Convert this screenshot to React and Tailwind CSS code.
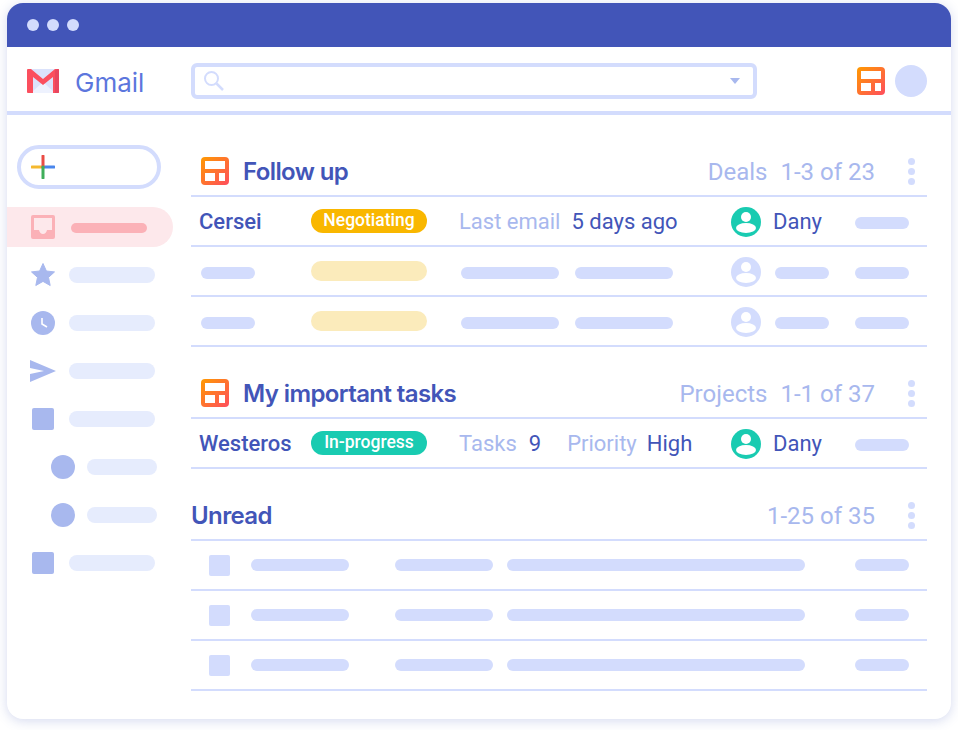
const pillColors = "bg-[#d3dcfd]";

function Pill({ className }) {
  return <div className={"rounded-full " + className}></div>;
}

function TileIcon({ className }) {
  return (
    <svg className={className} width="28" height="28" viewBox="0 0 28 28" xmlns="http://www.w3.org/2000/svg">
      <defs>
        <linearGradient id="tile" x1="0" y1="0" x2="1" y2="1">
          <stop offset="0" stopColor="#ff9a00" />
          <stop offset="1" stopColor="#ff4d5e" />
        </linearGradient>
      </defs>
      <rect width="28" height="28" rx="4" fill="url(#tile)" />
      <rect x="4" y="4" width="20" height="8" fill="#fff" />
      <rect x="4" y="16" width="10" height="8" fill="#fff" />
      <rect x="18" y="16" width="6" height="8" fill="#fff" />
    </svg>
  );
}

function GmailLogo() {
  return (
    <svg width="32" height="24" viewBox="0 0 32 24" xmlns="http://www.w3.org/2000/svg">
      <rect x="4" y="0" width="24" height="24" fill="#dbe2fb" />
      <path d="M4 24 L16 13 L28 24 Z" fill="#eef2fe" />
      <path d="M0 1 Q0 0 1 0 H4 L16 10 L28 0 H31 Q32 0 32 1 V23 Q32 24 31 24 H26 V8 L16 16 L6 8 V24 H1 Q0 24 0 23 Z" fill="#fb4f5e" />
      <path d="M30 0 H31 Q32 0 32 1 V23 Q32 24 31 24 H28 V2 Z" fill="#e8465f" />
    </svg>
  );
}

function Avatar({ color }) {
  return (
    <svg className="mt-[2px] shrink-0" width="30" height="30" viewBox="0 0 30 30" xmlns="http://www.w3.org/2000/svg">
      <circle cx="15" cy="15" r="15" fill={color} />
      <circle cx="15" cy="10" r="5" fill="#fff" />
      <ellipse cx="15" cy="21" rx="10" ry="5" fill="#fff" />
    </svg>
  );
}

function SidebarIcon({ kind }) {
  if (kind === "inbox") {
    return (
      <svg width="24" height="24" viewBox="0 0 24 24" xmlns="http://www.w3.org/2000/svg">
        <path fillRule="evenodd" d="M2 0 H22 Q24 0 24 2 V22 Q24 24 22 24 H2 Q0 24 0 22 V2 Q0 0 2 0 Z M3 3 V15 H8 Q9 19 12 19 Q15 19 16 15 H21 V3 Z" fill="#fbb1b7" />
      </svg>
    );
  }
  if (kind === "star") {
    return (
      <svg width="24" height="24" viewBox="0 0 24 24" xmlns="http://www.w3.org/2000/svg">
        <path d="M12 0.5 L15.4 8 L23.5 8.9 L17.5 14.4 L19.2 22.5 L12 18.4 L4.8 22.5 L6.5 14.4 L0.5 8.9 L8.6 8 Z" fill="#a8b8ee" stroke="#a8b8ee" strokeWidth="1" strokeLinejoin="round" />
      </svg>
    );
  }
  if (kind === "clock") {
    return (
      <svg width="24" height="24" viewBox="0 0 24 24" xmlns="http://www.w3.org/2000/svg">
        <circle cx="12" cy="12" r="12" fill="#a8b8ee" />
        <path d="M11 7 V13 L16 16" fill="none" stroke="#fff" strokeWidth="1.6" />
      </svg>
    );
  }
  if (kind === "send") {
    return (
      <svg className="-ml-[1px] shrink-0" width="26" height="24" viewBox="0 0 26 24" xmlns="http://www.w3.org/2000/svg">
        <path d="M0 1 L26 12 L0 23 V15 L14 12 L0 9 Z" fill="#a8b8ee" />
      </svg>
    );
  }
  if (kind === "circle") {
    return <div className="w-6 h-6 rounded-full bg-[#a8b8ee]"></div>;
  }
  return <div className="w-[22px] h-[22px] rounded-[2px] bg-[#a8b8ee]"></div>;
}

const sidebarRows = [
  { kind: "star" },
  { kind: "clock" },
  { kind: "send" },
  { kind: "square" },
  { kind: "circle", sub: true },
  { kind: "circle", sub: true },
  { kind: "square" },
];

function Sidebar() {
  return (
    <aside className="w-[166px] shrink-0 pt-[30px]">
      <div className="ml-[10px] w-[144px] h-[44px] rounded-full border-4 border-[#d3dcfd] flex items-center pl-[10px]">
        <svg width="24" height="24" viewBox="0 0 24 24" xmlns="http://www.w3.org/2000/svg">
          <path d="M1 12 H12" stroke="#f5b92f" strokeWidth="3" strokeLinecap="round" />
          <path d="M12 12 H23" stroke="#4a86ec" strokeWidth="3" strokeLinecap="round" />
          <path d="M12 1 V12" stroke="#ea4c45" strokeWidth="3" strokeLinecap="round" />
          <path d="M12 12 V23" stroke="#3fae5a" strokeWidth="3" strokeLinecap="round" />
        </svg>
      </div>
      <div className="mt-[18px] h-[40px] rounded-r-full bg-[#fde8eb] flex items-center pl-[24px]">
        <SidebarIcon kind="inbox" />
        <Pill className="ml-[16px] mt-[2px] w-[76px] h-[10px] bg-[#fbb1b7]" />
      </div>
      <div className="mt-1">
        {sidebarRows.map((row, i) => (
          <div key={i} className={"h-[48px] flex items-center " + (row.sub ? "pl-[44px]" : "pl-[24px]")}>
            <div className="w-6 h-6 flex items-center justify-center">
              <SidebarIcon kind={row.kind} />
            </div>
            <Pill className={row.sub ? "ml-[12px] w-[70px] h-4 bg-[#e6ecfd]" : "ml-[14px] w-[86px] h-4 bg-[#e6ecfd]"} />
          </div>
        ))}
      </div>
    </aside>
  );
}

function SectionHeader({ title, icon, label, range, className }) {
  return (
    <div className={"flex items-center justify-between border-b-2 border-[#d3dcfd] h-[52px] pt-[3px] " + className}>
      <div className="flex items-center">
        {icon && <TileIcon className="ml-[10px] mr-[14px] -mt-[1px]" />}
        <span className="font-['Inter',sans-serif] text-[24px] font-semibold tracking-[-0.6px] text-[#4255b8]">{title}</span>
      </div>
      <div className="flex items-center">
        <span className="text-[24px] text-[#a8b8ee]">{label && <span className="mr-[13px]">{label}</span>}{range}</span>
        <div className="ml-[33px] mr-[12px] -mt-[1px] flex flex-col gap-[3px]">
          <div className="w-[7px] h-[7px] rounded-full bg-[#d3dcfd]"></div>
          <div className="w-[7px] h-[7px] rounded-full bg-[#d3dcfd]"></div>
          <div className="w-[7px] h-[7px] rounded-full bg-[#d3dcfd]"></div>
        </div>
      </div>
    </div>
  );
}

function Row({ children }) {
  return (
    <div className="grid grid-cols-[120px_148px_272px_124px_1fr] items-center h-[50px] border-b-2 border-[#d3dcfd]">
      {children}
    </div>
  );
}

function Person() {
  return (
    <div className="flex items-center">
      <Avatar color="#19cbb1" />
      <span className="ml-3 text-[22px] text-[#4255b8]">Dany</span>
    </div>
  );
}

function Badge({ color, text }) {
  return (
    <div className={"w-[116px] h-6 pb-[2px] rounded-full text-white text-[17.5px] font-medium flex items-center justify-center " + color}>{text}</div>
  );
}

function EmptyRow() {
  return (
    <Row>
      <Pill className={"ml-[10px] mt-1 w-[54px] h-3 " + pillColors} />
      <Pill className="w-[116px] h-5 bg-[#fbebbb]" />
      <div className="flex pl-[2px] mt-1 gap-4">
        <Pill className={"w-[98px] h-3 " + pillColors} />
        <Pill className={"w-[98px] h-3 " + pillColors} />
      </div>
      <div className="flex items-center">
        <Avatar color="#d3dcfd" />
        <Pill className={"ml-[14px] mt-1 w-[54px] h-3 " + pillColors} />
      </div>
      <Pill className={"mt-1 w-[54px] h-3 " + pillColors} />
    </Row>
  );
}

function MailRow() {
  return (
    <div className="flex items-center h-[50px] border-b-2 border-[#d3dcfd]">
      <div className="ml-[18px] mt-[1px] w-[21px] h-[21px] rounded-[2px] bg-[#d3dcfd]"></div>
      <Pill className={"ml-[21px] w-[98px] h-3 " + pillColors} />
      <Pill className={"ml-[46px] w-[98px] h-3 " + pillColors} />
      <Pill className={"ml-[14px] w-[298px] h-3 " + pillColors} />
      <Pill className={"ml-[50px] w-[54px] h-3 " + pillColors} />
    </div>
  );
}

export default function App() {
  return (
    <div className="w-[958px] h-[730px] bg-white pt-[3px] pl-[7px] font-['Roboto',sans-serif]">
      <div className="w-[944px] h-[716px] bg-white rounded-2xl overflow-hidden shadow-[0_2px_12px_rgba(66,85,184,0.22)] flex flex-col">
        <div className="h-[44px] shrink-0 bg-[#4255b8] flex items-center pl-5 gap-2">
          <div className="w-3 h-3 rounded-full bg-[#d3dcfd]"></div>
          <div className="w-3 h-3 rounded-full bg-[#d3dcfd]"></div>
          <div className="w-3 h-3 rounded-full bg-[#d3dcfd]"></div>
        </div>

        <div className="h-[68px] shrink-0 border-b-4 border-[#d3dcfd] flex items-center pl-5 pt-1">
          <GmailLogo />
          <span className="ml-[16px] w-[116px] mt-[3px] font-['Inter',sans-serif] text-[26px] text-[#5c76dd]">Gmail</span>
          <div className="w-[566px] h-9 rounded-md border-4 border-[#d3dcfd] flex items-center justify-between pl-2 pr-[13px]">
            <svg width="22" height="22" viewBox="0 0 22 22" xmlns="http://www.w3.org/2000/svg">
              <circle cx="8.5" cy="8.5" r="6.5" fill="none" stroke="#d3dcfd" strokeWidth="2" />
              <path d="M13.5 13.5 L20 20" stroke="#d3dcfd" strokeWidth="2.5" />
            </svg>
            <svg width="10" height="6" viewBox="0 0 10 6" xmlns="http://www.w3.org/2000/svg">
              <path d="M0 0 H10 L5 6 Z" fill="#a8b8ee" />
            </svg>
          </div>
          <TileIcon className="ml-[100px]" />
          <div className="ml-[10px] w-8 h-8 rounded-full bg-[#d3dcfd]"></div>
        </div>

        <div className="flex flex-1 min-h-0">
          <Sidebar />
          <main className="w-[736px] ml-[18px] pt-[30px]">
            <SectionHeader title="Follow up" icon label="Deals" range="1-3 of 23" />
            <Row>
              <span className="pl-2 text-[22px] font-medium text-[#4255b8]">Cersei</span>
              <Badge color="bg-[#f9b700]" text="Negotiating" />
              <div className="text-[22px]">
                <span className="text-[#a8b8ee]">Last email</span>
                <span className="ml-[11px] text-[#4255b8]">5 days ago</span>
              </div>
              <Person />
              <Pill className={"mt-1 w-[54px] h-3 " + pillColors} />
            </Row>
            <EmptyRow />
            <EmptyRow />

            <SectionHeader title="My important tasks" icon label="Projects" range="1-1 of 37" className="mt-[20px]" />
            <Row>
              <span className="pl-2 text-[22px] font-medium text-[#4255b8]">Westeros</span>
              <Badge color="bg-[#19cbb1]" text="In-progress" />
              <div className="text-[22px] flex">
                <span className="text-[#a8b8ee]">Tasks</span>
                <span className="ml-3 text-[#4255b8]">9</span>
                <span className="ml-[26px] text-[#a8b8ee]">Priority</span>
                <span className="ml-[10px] text-[#4255b8]">High</span>
              </div>
              <Person />
              <Pill className={"mt-1 w-[54px] h-3 " + pillColors} />
            </Row>

            <SectionHeader title="Unread" range="1-25 of 35" className="mt-[20px]" />
            <MailRow />
            <MailRow />
            <MailRow />
          </main>
        </div>
      </div>
    </div>
  );
}
